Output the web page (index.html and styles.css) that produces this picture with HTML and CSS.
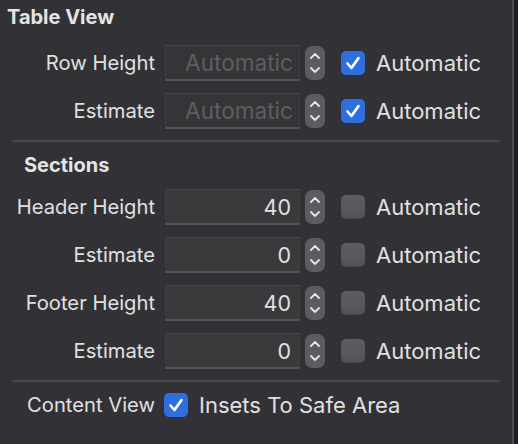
FILE: index.html
```html
<!DOCTYPE html>
<html>
<head>
<meta charset="utf-8">
<link rel="stylesheet" href="styles.css">
</head>
<body>
<div class="panel">
  <div class="title title-top">Table View</div>
  <div class="rows">
    <div class="row">
      <div class="label">Row Height</div>
      <div class="field disabled">Automatic</div>
      <div class="stepper"><svg width="20" height="34" viewBox="0 0 20 34"><path d="M6 12 L10 8 L14 12" /><path d="M6 22 L10 26 L14 22" /></svg></div>
      <div class="check on"><svg width="24" height="24" viewBox="0 0 24 24"><path d="M6.5 12.5 L10.5 17 L17.5 7" /></svg></div>
      <div class="clabel">Automatic</div>
    </div>
    <div class="row">
      <div class="label">Estimate</div>
      <div class="field disabled">Automatic</div>
      <div class="stepper"><svg width="20" height="34" viewBox="0 0 20 34"><path d="M6 12 L10 8 L14 12" /><path d="M6 22 L10 26 L14 22" /></svg></div>
      <div class="check on"><svg width="24" height="24" viewBox="0 0 24 24"><path d="M6.5 12.5 L10.5 17 L17.5 7" /></svg></div>
      <div class="clabel">Automatic</div>
    </div>
  </div>
  <div class="sep"></div>
  <div class="title title-sec">Sections</div>
  <div class="rows">
    <div class="row">
      <div class="label">Header Height</div>
      <div class="field">40</div>
      <div class="stepper"><svg width="20" height="34" viewBox="0 0 20 34"><path d="M6 12 L10 8 L14 12" /><path d="M6 22 L10 26 L14 22" /></svg></div>
      <div class="check"></div>
      <div class="clabel">Automatic</div>
    </div>
    <div class="row">
      <div class="label">Estimate</div>
      <div class="field">0</div>
      <div class="stepper"><svg width="20" height="34" viewBox="0 0 20 34"><path d="M6 12 L10 8 L14 12" /><path d="M6 22 L10 26 L14 22" /></svg></div>
      <div class="check"></div>
      <div class="clabel">Automatic</div>
    </div>
    <div class="row">
      <div class="label">Footer Height</div>
      <div class="field">40</div>
      <div class="stepper"><svg width="20" height="34" viewBox="0 0 20 34"><path d="M6 12 L10 8 L14 12" /><path d="M6 22 L10 26 L14 22" /></svg></div>
      <div class="check"></div>
      <div class="clabel">Automatic</div>
    </div>
    <div class="row">
      <div class="label">Estimate</div>
      <div class="field">0</div>
      <div class="stepper"><svg width="20" height="34" viewBox="0 0 20 34"><path d="M6 12 L10 8 L14 12" /><path d="M6 22 L10 26 L14 22" /></svg></div>
      <div class="check"></div>
      <div class="clabel">Automatic</div>
    </div>
  </div>
  <div class="sep sep2"></div>
  <div class="row row-cv">
    <div class="label">Content View</div>
    <div class="check on cv"><svg width="24" height="24" viewBox="0 0 24 24"><path d="M6.5 12.5 L10.5 17 L17.5 7" /></svg></div>
    <div class="clabel cvl">Insets To Safe Area</div>
  </div>
</div>
</body>
</html>
```

FILE: styles.css
```css
html, body {
  margin: 0;
  padding: 0;
  background: #1f1f23;
}
body {
  width: 518px;
  height: 444px;
  overflow: hidden;
  font-family: Inter, "Noto Sans", sans-serif;
  color: #e0e0e1;
}
.panel {
  width: 514px;
  height: 444px;
  background: #323236;
  border-right: 2px solid #4e4e52;
  box-sizing: border-box;
  overflow: hidden;
}
.title {
  font-weight: 700;
  font-size: 20px;
  line-height: 34px;
  height: 34px;
  color: #e4e4e5;
}
.title-top {
  padding-left: 7px;
}
.title-sec {
  padding-left: 24px;
  margin-top: 6px;
}
.rows {
  display: flex;
  flex-direction: column;
  gap: 12px;
  margin-top: 11px;
}
.title-sec + .rows {
  margin-top: 7px;
}
.row {
  display: flex;
  align-items: center;
  height: 36px;
}
.label {
  width: 155px;
  text-align: right;
  font-size: 20.2px;
  line-height: 38px;
  flex: none;
  white-space: nowrap;
}
.field {
  width: 135px;
  height: 36px;
  margin-left: 10px;
  box-sizing: border-box;
  background: #3a3a3d;
  border-top: 1px solid #48484b;
  border-left: 1px solid #3f3f42;
  border-right: 1px solid #3f3f42;
  border-bottom: 2px solid #555558;
  text-align: right;
  font-size: 21.5px;
  line-height: 34px;
  padding-right: 8px;
  color: #e0e0e1;
  flex: none;
  white-space: nowrap;
}
.field.disabled {
  color: #5e5e61;
  background: #353538;
  padding-right: 6px;
  font-size: 22.6px;
}
.stepper {
  width: 20px;
  height: 34px;
  margin-left: 5px;
  border-radius: 7px;
  background: #5c5c60;
  flex: none;
}
.stepper svg {
  display: block;
}
.stepper path {
  fill: none;
  stroke: #e6e6e8;
  stroke-width: 1.8;
  stroke-linecap: round;
  stroke-linejoin: round;
}
.check {
  width: 24px;
  height: 24px;
  margin-left: 16px;
  border-radius: 5px;
  background: linear-gradient(#5e5e62, #545458);
  box-shadow: inset 0 -1px 0 #48484c;
  flex: none;
}
.check.on {
  background: #2f6ede;
  box-shadow: none;
}
.check svg {
  display: block;
}
.check path {
  fill: none;
  stroke: #ffffff;
  stroke-width: 2.6;
  stroke-linecap: round;
  stroke-linejoin: round;
}
.clabel {
  margin-left: 11px;
  font-size: 22px;
  line-height: 38px;
  white-space: nowrap;
}
.sep {
  height: 2px;
  margin: 11px 0 0 12px;
  width: 488px;
  background: #48484c;
}
.row-cv {
  margin-top: 5px;
}
.check.cv {
  margin-left: 9px;
}
.clabel.cvl {
  margin-left: 11px;
}
```
